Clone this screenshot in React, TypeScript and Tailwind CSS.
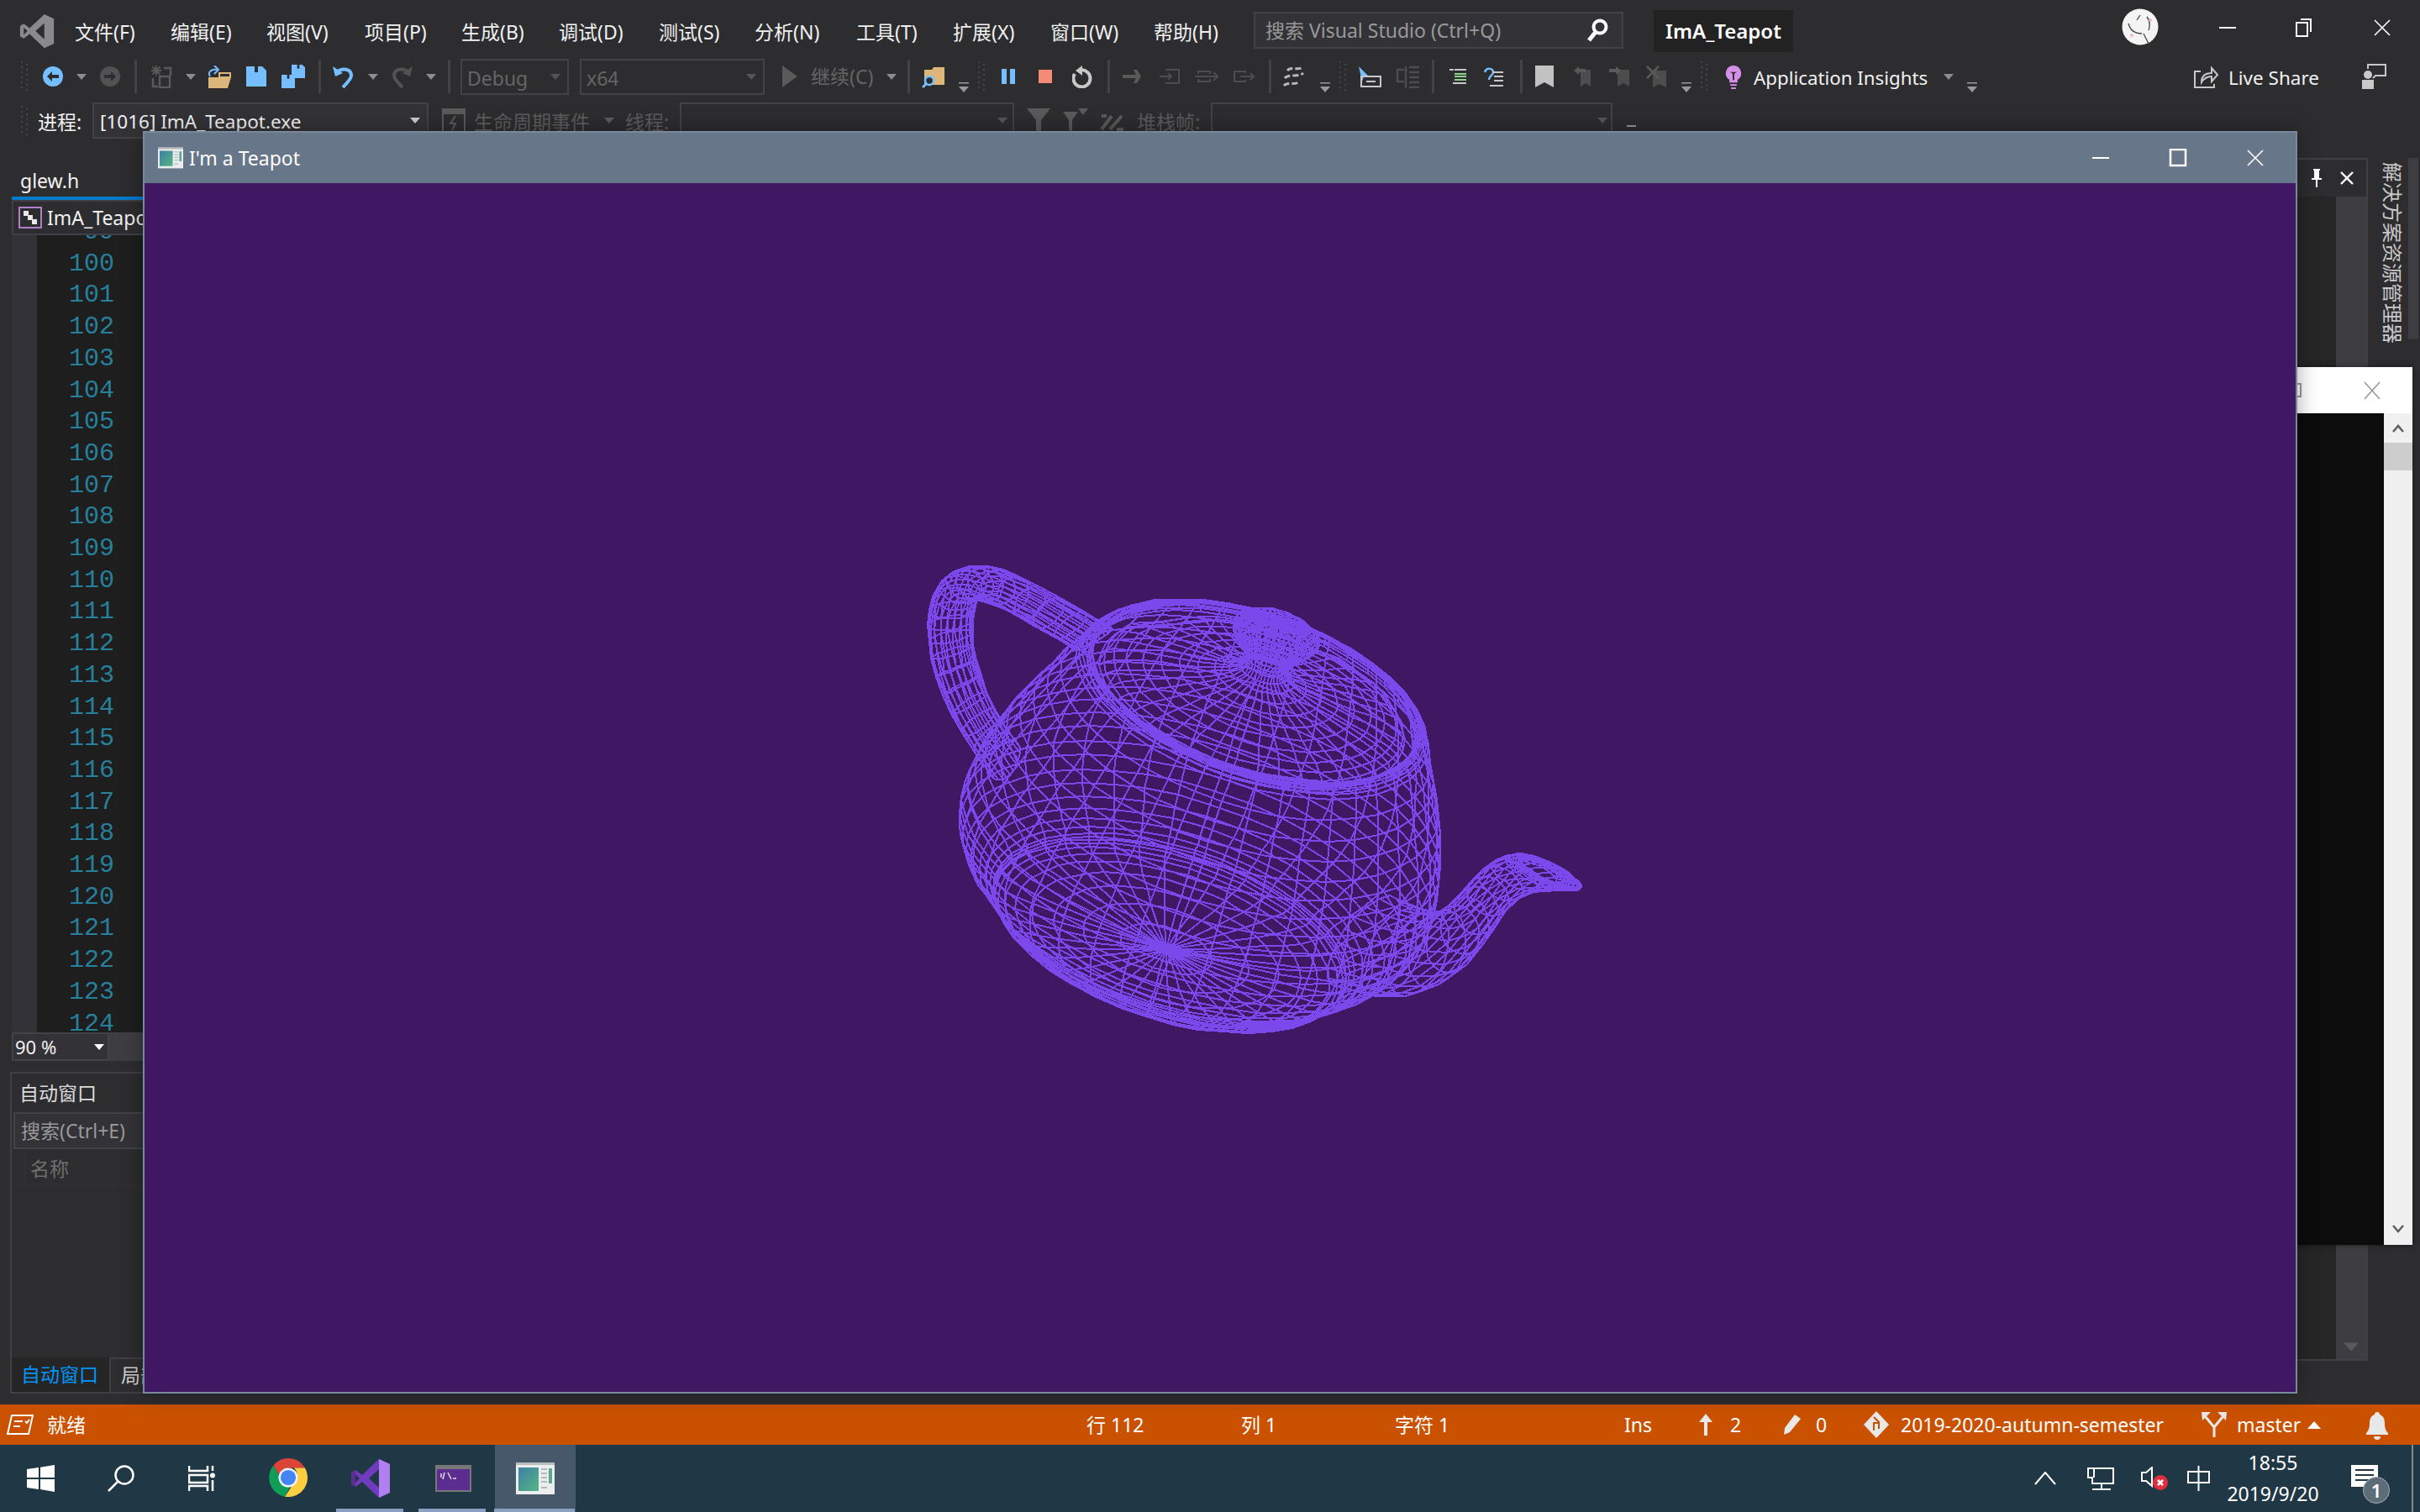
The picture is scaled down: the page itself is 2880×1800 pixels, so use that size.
import { useMemo } from "react"

// Newell teapot control points
const V = [1.4,0,2.4,1.4,-0.784,2.4,0.784,-1.4,2.4,0,-1.4,2.4,1.3375,0,2.53125,1.3375,-0.749,2.53125,0.749,-1.3375,2.53125,0,-1.3375,2.53125,1.4375,0,2.53125,1.4375,-0.805,2.53125,0.805,-1.4375,2.53125,0,-1.4375,2.53125,1.5,0,2.4,1.5,-0.84,2.4,0.84,-1.5,2.4,0,-1.5,2.4,-0.784,-1.4,2.4,-1.4,-0.784,2.4,-1.4,0,2.4,-0.749,-1.3375,2.53125,-1.3375,-0.749,2.53125,-1.3375,0,2.53125,-0.805,-1.4375,2.53125,-1.4375,-0.805,2.53125,-1.4375,0,2.53125,-0.84,-1.5,2.4,-1.5,-0.84,2.4,-1.5,0,2.4,-1.4,0.784,2.4,-0.784,1.4,2.4,0,1.4,2.4,-1.3375,0.749,2.53125,-0.749,1.3375,2.53125,0,1.3375,2.53125,-1.4375,0.805,2.53125,-0.805,1.4375,2.53125,0,1.4375,2.53125,-1.5,0.84,2.4,-0.84,1.5,2.4,0,1.5,2.4,0.784,1.4,2.4,1.4,0.784,2.4,0.749,1.3375,2.53125,1.3375,0.749,2.53125,0.805,1.4375,2.53125,1.4375,0.805,2.53125,0.84,1.5,2.4,1.5,0.84,2.4,1.75,0,1.875,1.75,-0.98,1.875,0.98,-1.75,1.875,0,-1.75,1.875,2,0,1.35,2,-1.12,1.35,1.12,-2,1.35,0,-2,1.35,2,0,0.9,2,-1.12,0.9,1.12,-2,0.9,0,-2,0.9,-0.98,-1.75,1.875,-1.75,-0.98,1.875,-1.75,0,1.875,-1.12,-2,1.35,-2,-1.12,1.35,-2,0,1.35,-1.12,-2,0.9,-2,-1.12,0.9,-2,0,0.9,-1.75,0.98,1.875,-0.98,1.75,1.875,0,1.75,1.875,-2,1.12,1.35,-1.12,2,1.35,0,2,1.35,-2,1.12,0.9,-1.12,2,0.9,0,2,0.9,0.98,1.75,1.875,1.75,0.98,1.875,1.12,2,1.35,2,1.12,1.35,1.12,2,0.9,2,1.12,0.9,2,0,0.45,2,-1.12,0.45,1.12,-2,0.45,0,-2,0.45,1.5,0,0.225,1.5,-0.84,0.225,0.84,-1.5,0.225,0,-1.5,0.225,1.5,0,0.15,1.5,-0.84,0.15,0.84,-1.5,0.15,0,-1.5,0.15,-1.12,-2,0.45,-2,-1.12,0.45,-2,0,0.45,-0.84,-1.5,0.225,-1.5,-0.84,0.225,-1.5,0,0.225,-0.84,-1.5,0.15,-1.5,-0.84,0.15,-1.5,0,0.15,-2,1.12,0.45,-1.12,2,0.45,0,2,0.45,-1.5,0.84,0.225,-0.84,1.5,0.225,0,1.5,0.225,-1.5,0.84,0.15,-0.84,1.5,0.15,0,1.5,0.15,1.12,2,0.45,2,1.12,0.45,0.84,1.5,0.225,1.5,0.84,0.225,0.84,1.5,0.15,1.5,0.84,0.15,-1.6,0,2.025,-1.6,-0.3,2.025,-1.5,-0.3,2.25,-1.5,0,2.25,-2.3,0,2.025,-2.3,-0.3,2.025,-2.5,-0.3,2.25,-2.5,0,2.25,-2.7,0,2.025,-2.7,-0.3,2.025,-3,-0.3,2.25,-3,0,2.25,-2.7,0,1.8,-2.7,-0.3,1.8,-3,-0.3,1.8,-3,0,1.8,-1.5,0.3,2.25,-1.6,0.3,2.025,-2.5,0.3,2.25,-2.3,0.3,2.025,-3,0.3,2.25,-2.7,0.3,2.025,-3,0.3,1.8,-2.7,0.3,1.8,-2.7,0,1.575,-2.7,-0.3,1.575,-3,-0.3,1.35,-3,0,1.35,-2.5,0,1.125,-2.5,-0.3,1.125,-2.65,-0.3,0.9375,-2.65,0,0.9375,-2,-0.3,0.9,-1.9,-0.3,0.6,-1.9,0,0.6,-3,0.3,1.35,-2.7,0.3,1.575,-2.65,0.3,0.9375,-2.5,0.3,1.125,-1.9,0.3,0.6,-2,0.3,0.9,1.7,0,1.425,1.7,-0.66,1.425,1.7,-0.66,0.6,1.7,0,0.6,2.6,0,1.425,2.6,-0.66,1.425,3.1,-0.66,0.825,3.1,0,0.825,2.3,0,2.1,2.3,-0.25,2.1,2.4,-0.25,2.025,2.4,0,2.025,2.7,0,2.4,2.7,-0.25,2.4,3.3,-0.25,2.4,3.3,0,2.4,1.7,0.66,0.6,1.7,0.66,1.425,3.1,0.66,0.825,2.6,0.66,1.425,2.4,0.25,2.025,2.3,0.25,2.1,3.3,0.25,2.4,2.7,0.25,2.4,2.8,0,2.475,2.8,-0.25,2.475,3.525,-0.25,2.49375,3.525,0,2.49375,2.9,0,2.475,2.9,-0.15,2.475,3.45,-0.15,2.5125,3.45,0,2.5125,2.8,0,2.4,2.8,-0.15,2.4,3.2,-0.15,2.4,3.2,0,2.4,3.525,0.25,2.49375,2.8,0.25,2.475,3.45,0.15,2.5125,2.9,0.15,2.475,3.2,0.15,2.4,2.8,0.15,2.4,0,0,3.15,0,-0.002,3.15,0.002,0,3.15,0.8,0,3.15,0.8,-0.45,3.15,0.45,-0.8,3.15,0,-0.8,3.15,0,0,2.85,0.2,0,2.7,0.2,-0.112,2.7,0.112,-0.2,2.7,0,-0.2,2.7,-0.002,0,3.15,-0.45,-0.8,3.15,-0.8,-0.45,3.15,-0.8,0,3.15,-0.112,-0.2,2.7,-0.2,-0.112,2.7,-0.2,0,2.7,0,0.002,3.15,-0.8,0.45,3.15,-0.45,0.8,3.15,0,0.8,3.15,-0.2,0.112,2.7,-0.112,0.2,2.7,0,0.2,2.7,0.45,0.8,3.15,0.8,0.45,3.15,0.112,0.2,2.7,0.2,0.112,2.7,0.4,0,2.55,0.4,-0.224,2.55,0.224,-0.4,2.55,0,-0.4,2.55,1.3,0,2.55,1.3,-0.728,2.55,0.728,-1.3,2.55,0,-1.3,2.55,1.3,0,2.4,1.3,-0.728,2.4,0.728,-1.3,2.4,0,-1.3,2.4,-0.224,-0.4,2.55,-0.4,-0.224,2.55,-0.4,0,2.55,-0.728,-1.3,2.55,-1.3,-0.728,2.55,-1.3,0,2.55,-0.728,-1.3,2.4,-1.3,-0.728,2.4,-1.3,0,2.4,-0.4,0.224,2.55,-0.224,0.4,2.55,0,0.4,2.55,-1.3,0.728,2.55,-0.728,1.3,2.55,0,1.3,2.55,-0.728,1.3,2.4,-1.3,0.728,2.4,0,1.3,2.4,0.224,0.4,2.55,0.4,0.224,2.55,0.728,1.3,2.55,1.3,0.728,2.55,0.728,1.3,2.4,1.3,0.728,2.4,0,0,0,1.5,0,0.15,1.5,0.84,0.15,0.84,1.5,0.15,0,1.5,0.15,1.5,0,0.075,1.5,0.84,0.075,0.84,1.5,0.075,0,1.5,0.075,1.425,0,0,1.425,0.798,0,0.798,1.425,0,0,1.425,0,-0.84,1.5,0.15,-1.5,0.84,0.15,-1.5,0,0.15,-0.84,1.5,0.075,-1.5,0.84,0.075,-1.5,0,0.075,-0.798,1.425,0,-1.425,0.798,0,-1.425,0,0,-1.5,-0.84,0.15,-0.84,-1.5,0.15,0,-1.5,0.15,-1.5,-0.84,0.075,-0.84,-1.5,0.075,0,-1.5,0.075,-1.425,-0.798,0,-0.798,-1.425,0,0,-1.425,0,0.84,-1.5,0.15,1.5,-0.84,0.15,0.84,-1.5,0.075,1.5,-0.84,0.075,0.798,-1.425,0,1.425,-0.798,0]

const PATCHES = [
  [1,2,3,4,5,6,7,8,9,10,11,12,13,14,15,16],[4,17,18,19,8,20,21,22,12,23,24,25,16,26,27,28],
  [19,29,30,31,22,32,33,34,25,35,36,37,28,38,39,40],[31,41,42,1,34,43,44,5,37,45,46,9,40,47,48,13],
  [13,14,15,16,49,50,51,52,53,54,55,56,57,58,59,60],[16,26,27,28,52,61,62,63,56,64,65,66,60,67,68,69],
  [28,38,39,40,63,70,71,72,66,73,74,75,69,76,77,78],[40,47,48,13,72,79,80,49,75,81,82,53,78,83,84,57],
  [57,58,59,60,85,86,87,88,89,90,91,92,93,94,95,96],[60,67,68,69,88,97,98,99,92,100,101,102,96,103,104,105],
  [69,76,77,78,99,106,107,108,102,109,110,111,105,112,113,114],[78,83,84,57,108,115,116,85,111,117,118,89,114,119,120,93],
  [121,122,123,124,125,126,127,128,129,130,131,132,133,134,135,136],[124,137,138,121,128,139,140,125,132,141,142,129,136,143,144,133],
  [133,134,135,136,145,146,147,148,149,150,151,152,69,153,154,155],[136,143,144,133,148,156,157,145,152,158,159,149,155,160,161,69],
  [162,163,164,165,166,167,168,169,170,171,172,173,174,175,176,177],[165,178,179,162,169,180,181,166,173,182,183,170,177,184,185,174],
  [174,175,176,177,186,187,188,189,190,191,192,193,194,195,196,197],[177,184,185,174,189,198,199,186,193,200,201,190,197,202,203,194],
  [204,204,204,204,207,208,209,210,211,211,211,211,212,213,214,215],[204,204,204,204,210,217,218,219,211,211,211,211,215,220,221,222],
  [204,204,204,204,219,224,225,226,211,211,211,211,222,227,228,229],[204,204,204,204,226,230,231,207,211,211,211,211,229,232,233,212],
  [212,213,214,215,234,235,236,237,238,239,240,241,242,243,244,245],[215,220,221,222,237,246,247,248,241,249,250,251,245,252,253,254],
  [222,227,228,229,248,255,256,257,251,258,259,260,254,261,262,263],[229,232,233,212,257,264,265,234,260,266,267,238,263,268,269,242],
  [270,270,270,270,279,280,281,282,275,276,277,278,271,272,273,274],[270,270,270,270,282,289,290,291,278,286,287,288,274,283,284,285],
  [270,270,270,270,291,298,299,300,288,295,296,297,285,292,293,294],[270,270,270,270,300,305,306,279,297,303,304,275,294,301,302,271],
]

const bern = (t: number) => [(1 - t) ** 3, 3 * t * (1 - t) ** 2, 3 * t * t * (1 - t), t ** 3]

function teapotPath(n: number) {
  // pivot sits near the window centre, slight size falloff towards the spout
  const project = (x: number, y: number, z: number) => {
    const dz = z - 1.5
    const f = 1 - 0.004 * x
    const px = 1280 + f * (x * 114 + y * 80 + dz * 43)
    const py = 728 + f * (x * 68 - y * 36 - dz * 122.7)
    // the window was drawn at half resolution, so snap to even pixels
    return `${Math.round(px / 2) * 2} ${Math.round(py / 2) * 2}`
  }
  const out: string[] = []
  for (const patch of PATCHES) {
    const grid: string[][] = []
    for (let i = 0; i <= n; i++) {
      const row: string[] = []
      const bu = bern(i / n)
      for (let j = 0; j <= n; j++) {
        const bv = bern(j / n)
        let x = 0, y = 0, z = 0
        for (let a = 0; a < 4; a++) {
          for (let b = 0; b < 4; b++) {
            const k = (patch[a * 4 + b] - 1) * 3
            const w = bu[a] * bv[b]
            x += V[k] * w
            y += V[k + 1] * w
            z += V[k + 2] * w
          }
        }
        row.push(project(x, y, z))
      }
      grid.push(row)
    }
    for (let i = 0; i <= n; i++) {
      for (let j = 0; j <= n; j++) {
        if (j < n) out.push(`M${grid[i][j]}L${grid[i][j + 1]}`)
        if (i < n) out.push(`M${grid[i][j]}L${grid[i + 1][j]}`)
      }
    }
  }
  return out.join("")
}

function Teapot() {
  const d = useMemo(() => teapotPath(10), [])
  return (
    <svg width="2560" height="1439" className="block">
      <path d={d} fill="none" stroke="#7a48eb" strokeWidth="2" shapeRendering="crispEdges" />
    </svg>
  )
}

function Grip() {
  const dots = []
  for (let y = 0; y < 6; y++) {
    dots.push(<rect key={`a${y}`} x="1" y={1 + y * 6} width="2" height="2" fill="#46464a" />)
    dots.push(<rect key={`b${y}`} x="7" y={4 + y * 6} width="2" height="2" fill="#46464a" />)
  }
  return <svg width="10" height="38" className="shrink-0">{dots}</svg>
}

const Sep = ({ ml }: { ml: string }) => <div className={`${ml} w-[3px] h-[40px] bg-[#434346] shrink-0`} />

const Caret = ({ className = "", color = "#8c8c8c" }: { className?: string; color?: string }) => (
  <svg width="12" height="7" className={`shrink-0 ${className}`}><path d="M0 0h12L6 7z" fill={color} /></svg>
)

const Overflow = ({ className = "" }: { className?: string }) => (
  <svg width="12" height="12" className={`shrink-0 mt-[26px] ${className}`}>
    <rect x="0" y="0" width="12" height="1.500" fill="#999" /><path d="M0 5h12L6 12z" fill="#999" />
  </svg>
)

const Disc = ({ fill, dir }: { fill: string; dir: "l" | "r" }) => (
  <svg width="24" height="24" viewBox="0 0 24 24" className="block shrink-0">
    <circle cx="12" cy="12" r="12" fill={fill} />
    <path d={dir === "l" ? "M5 12l6-6v4h8v4h-8v4z" : "M19 12l-6-6v4H5v4h8v4z"} fill="#2d2d30" />
  </svg>
)

const Floppy = ({ size = 24 }: { size?: number }) => (
  <svg width={size} height={size} viewBox="0 0 24 24" className="block">
    <path d="M0 0h19l5 5v19H0z" fill="#75beff" /><rect x="10" y="0" width="4" height="7" fill="#2d2d30" />
  </svg>
)

const Bookmark = ({ fill }: { fill: string }) => (
  <svg width="22" height="26" viewBox="0 0 22 26" className="block shrink-0"><path d="M0 0h22v26L11 20 0 26z" fill={fill} /></svg>
)

function AppIcon({ w, h }: { w: number; h: number }) {
  return (
    <svg width={w} height={h} viewBox="0 0 46 38" className="block shrink-0">
      <defs>
        <linearGradient id="tg" x1="0" y1="0" x2="1" y2="1"><stop offset="0" stopColor="#3f7fa6" /><stop offset="1" stopColor="#55b583" /></linearGradient>
      </defs>
      <rect width="46" height="38" fill="#eceeee" />
      <rect width="46" height="3" fill="#b8bcbc" />
      <rect x="3" y="6" width="24" height="28" fill="url(#tg)" />
      <path d="M30 8h7M30 13h7M30 18h7M30 23h7M30 30h7" stroke="#b5b9b9" strokeWidth="2" />
      <rect x="39" y="7" width="4" height="18" fill="#5aa68f" />
    </svg>
  )
}

const VsPath = "M34 1L47 7V41L34 47 14 28 6 34 1 31V17L6 14 14 20ZM34 13L22 24 34 35ZM6 19V29L11 24Z"

function WinControls({ restore }: { restore: boolean }) {
  return (
    <>
      <svg width="20" height="2" className="shrink-0"><rect width="20" height="2" fill="#fff" /></svg>
      <svg width="22" height="22" className="ml-[71px] shrink-0">
        {restore ? (
          <path d="M6 1h12v15M1 5h13v16H1z" fill="none" stroke="#fff" strokeWidth="2" />
        ) : (
          <rect x="2" y="1" width="18" height="19" fill="none" stroke="#fff" strokeWidth="2.5" />
        )}
      </svg>
      <svg width="20" height="20" className="ml-[71px] shrink-0"><path d="M1 1l18 18M19 1L1 19" stroke="#fff" strokeWidth="1.6" /></svg>
    </>
  )
}

const MENUS = [
  ["文件(F)", "w-[114px]"], ["编辑(E)", "w-[114px]"], ["视图(V)", "w-[117px]"], ["项目(P)", "w-[115px]"],
  ["生成(B)", "w-[116px]"], ["调试(D)", "w-[119px]"], ["测试(S)", "w-[114px]"], ["分析(N)", "w-[121px]"],
  ["工具(T)", "w-[115px]"], ["扩展(X)", "w-[116px]"], ["窗口(W)", "w-[123px]"], ["帮助(H)", "w-[119px]"],
]

const LINES = Array.from({ length: 26 }, (_, i) => 99 + i)

function TitleRow() {
  return (
    <div className="h-[70px] flex items-start shrink-0">
      <svg width="42" height="44" viewBox="0 0 48 48" className="ml-[23px] mt-[15px] shrink-0"><path d={VsPath} fill="#8a8a8c" fillRule="evenodd" /></svg>
      <div className="ml-[24px] flex h-[76px] items-center">
        {MENUS.map(([m, w]) => <span key={m} className={`${w} text-[23px] text-[#f1f1f1] whitespace-nowrap`}>{m}</span>)}
      </div>
      <div className="mt-[14px] w-[440px] h-[44px] border-2 border-[#434346] bg-[#333337] flex items-center pl-[12px] pr-[16px] justify-between shrink-0">
        <span className="text-[23px] text-[#999999] whitespace-nowrap">搜索 Visual Studio (Ctrl+Q)</span>
        <svg width="26" height="28" viewBox="0 0 26 28"><circle cx="16" cy="10" r="7.5" fill="none" stroke="#fff" strokeWidth="4" /><path d="M11 16L3 26" stroke="#fff" strokeWidth="5" /></svg>
      </div>
      <div className="ml-[36px] mt-[12px] w-[166px] h-[50px] bg-[#222223] flex items-center justify-center text-[24px] font-semibold text-white shrink-0">ImA_Teapot</div>
      <svg width="44" height="44" viewBox="0 0 44 44" className="ml-[391px] mt-[10px] shrink-0">
        <circle cx="22" cy="22" r="21.5" fill="#f4f4f4" />
        <path d="M8 18c2 8 8 12 16 12M22 8l-4 6M30 10c3 4 4 10 2 16M26 30l6 12" fill="none" stroke="#444" strokeWidth="1.3" />
        <circle cx="34" cy="14" r="2" fill="#f0b8c8" /><circle cx="12" cy="32" r="2" fill="#f0b8c8" />
      </svg>
      <div className="ml-[72px] mt-[22px] flex items-center shrink-0"><WinControls restore /></div>
    </div>
  )
}

function MainToolbar() {
  return (
    <div className="h-[42px] flex items-center pl-[24px] shrink-0">
      <Grip />
      <span className="ml-[17px]"><Disc fill="#75beff" dir="l" /></span>
      <Caret className="ml-[16px]" />
      <span className="ml-[16px]"><Disc fill="#525252" dir="r" /></span>
      <Sep ml="ml-[17px]" />
      <svg width="26" height="27" viewBox="0 0 26 27" className="ml-[16px] shrink-0" fill="none" stroke="#5a5a5a" strokeWidth="2.4">
        <path d="M7 0v12M1 6h12M2.500 1.500l9 9M11.500 1.500l-9 9" strokeWidth="1.800" /><path d="M16 3h8v9M3 15v10h6M11 13h12v13H11z" />
      </svg>
      <Caret className="ml-[16px]" />
      <svg width="28" height="27" viewBox="0 0 28 27" className="ml-[14px] shrink-0">
        <path d="M14 9h13v5H14z" fill="none" stroke="#dcb67a" strokeWidth="2" /><path d="M1 14h27l-4 13H1z" fill="#dcb67a" />
        <path d="M3 13c-3-5 1-9 8-8M8 0l5 5-5 5" fill="none" stroke="#75beff" strokeWidth="2" />
      </svg>
      <span className="ml-[18px]"><Floppy /></span>
      <div className="ml-[18px] w-[28px] h-[28px] relative shrink-0">
        <span className="absolute right-0 top-0"><Floppy size={16} /></span>
        <span className="absolute left-0 bottom-0"><Floppy size={16} /></span>
      </div>
      <Sep ml="ml-[16px]" />
      <svg width="25" height="27" viewBox="0 0 25 27" className="ml-[14px] shrink-0" fill="none" stroke="#75beff" strokeWidth="4">
        <path d="M4 8c8-6 18-4 18 4 0 4-6 10-10 14" /><path d="M0 1l3 12 9-4z" fill="#75beff" stroke="none" />
      </svg>
      <Caret className="ml-[17px]" />
      <svg width="25" height="27" viewBox="0 0 25 27" className="ml-[16px] shrink-0" fill="none" stroke="#525252" strokeWidth="4">
        <path d="M21 8c-8-6-18-4-18 4 0 4 6 10 10 14" /><path d="M25 1l-3 12-9-4z" fill="#525252" stroke="none" />
      </svg>
      <Caret className="ml-[16px]" />
      <Sep ml="ml-[14px]" />
      <div className="ml-[12px] w-[129px] h-[43px] border-2 border-[#434346] flex items-center justify-between pl-[6px] pr-[8px] shrink-0">
        <span className="pt-[4px] text-[23px] text-[#656565]">Debug</span><Caret color="#555" />
      </div>
      <div className="ml-[13px] w-[220px] h-[43px] border-2 border-[#434346] flex items-center justify-between pl-[6px] pr-[8px] shrink-0">
        <span className="pt-[4px] text-[23px] text-[#656565]">x64</span><Caret color="#555" />
      </div>
      <svg width="18" height="26" className="ml-[21px] shrink-0"><path d="M0 0l18 13L0 26z" fill="#5a5a5a" /></svg>
      <span className="ml-[16px] w-[76px] text-[23px] text-[#656565] whitespace-nowrap">继续(C)</span>
      <Caret className="ml-[14px]" />
      <Sep ml="ml-[13px]" />
      <svg width="28" height="27" viewBox="0 0 28 27" className="ml-[14px] shrink-0">
        <path d="M3 5h9l2-3h13v21H3z" fill="#dcb67a" /><circle cx="9" cy="18" r="5" fill="#2d2d30" stroke="#75beff" strokeWidth="2.500" /><path d="M5 22l-4 4" stroke="#75beff" strokeWidth="3" />
      </svg>
      <Overflow className="ml-[16px]" />
      <span className="ml-[10px]"><Grip /></span>
      <svg width="16" height="18" className="ml-[19px] shrink-0"><rect width="6" height="18" fill="#75beff" /><rect x="10" width="6" height="18" fill="#75beff" /></svg>
      <div className="ml-[28px] w-[16px] h-[16px] bg-[#f38b76] shrink-0" />
      <svg width="24" height="27" viewBox="0 0 24 27" className="ml-[24px] shrink-0" fill="none" stroke="#c8c8c8" strokeWidth="4">
        <path d="M8 6a10 10 0 1 1-5 4" /><path d="M12 0v12L4 6z" fill="#c8c8c8" stroke="none" />
      </svg>
      <Sep ml="ml-[18px]" />
      <svg width="22" height="16" className="ml-[15px] shrink-0"><path d="M13 0h4l5 8-5 8h-4l3-6H0V6h16z" fill="#5a5a5a" /></svg>
      <svg width="24" height="18" className="ml-[22px] shrink-0" fill="none" stroke="#4d4d4d" strokeWidth="2"><path d="M7 1h16v16H7M0 9h14M10 5l4 4-4 4" /></svg>
      <svg width="28" height="14" className="ml-[18px] shrink-0" fill="none" stroke="#4d4d4d" strokeWidth="2"><path d="M4 4V1h14v3M4 10v3h14v-3M0 7h26M22 2l5 5-5 5" /></svg>
      <svg width="26" height="14" className="ml-[18px] shrink-0" fill="none" stroke="#4d4d4d" strokeWidth="2"><path d="M14 3V1H1v12h13v-2M8 7h16M20 3l4 4-4 4" /></svg>
      <Sep ml="ml-[16px]" />
      <svg width="30" height="28" viewBox="0 0 30 28" className="ml-[12px] shrink-0" fill="none" stroke="#b8b8b8" strokeWidth="3" strokeDasharray="7 3">
        <path d="M7 7c4-5 14 0 18-4M4 16c4-5 17-1 22-6M3 25c4-5 14 0 18-5" />
      </svg>
      <Overflow className="ml-[16px]" />
      <span className="ml-[10px]"><Grip /></span>
      <svg width="28" height="25" viewBox="0 0 28 25" className="ml-[14px] shrink-0">
        <path d="M0 0l11 11-5 1-2 6z" fill="#75beff" /><path d="M3 12h23v12H3zM9 18h11" fill="none" stroke="#c8c8c8" strokeWidth="2" />
      </svg>
      <svg width="28" height="27" className="ml-[16px] shrink-0" fill="none" stroke="#4d4d4d" strokeWidth="2.400"><path d="M10 5H2v14h8M12 1v26M16 2h12M16 8h12M16 14h12M16 20h12M16 26h12" /></svg>
      <Sep ml="ml-[15px]" />
      <svg width="20" height="18" className="ml-[18px] shrink-0" fill="none" strokeWidth="2"><path d="M0 1h5M6 1h14M4 17h16" stroke="#c8c8c8" /><path d="M6 6h14M6 9h14M6 13h14" stroke="#8fd18f" /></svg>
      <svg width="24" height="23" viewBox="0 0 24 23" className="ml-[20px] shrink-0" fill="none" strokeWidth="2"><path d="M2 6c2-6 10-5 10 0 0 4-5 4-5 9" stroke="#75beff" strokeWidth="2.500" /><path d="M11 6h13M13 11h11M13 16h11M8 22h16" stroke="#c8c8c8" /></svg>
      <Sep ml="ml-[20px]" />
      <span className="ml-[15px]"><Bookmark fill="#c2c2c2" /></span>
      <svg width="20" height="24" className="ml-[24px] shrink-0"><path d="M8 4h12v20l-6-4-6 4z" fill="#4d4d4d" /><path d="M0 5l6-5v3h8v4H6v3z" fill="#5a5a5a" /></svg>
      <svg width="24" height="24" className="ml-[22px] shrink-0"><path d="M10 4h14v20l-7-4-7 4z" fill="#4d4d4d" /><path d="M14 5L8 0v3H0v4h8v3z" fill="#5a5a5a" /></svg>
      <svg width="24" height="26" className="ml-[20px] shrink-0"><path d="M8 6h16v20l-8-4-8 4z" fill="#4d4d4d" /><path d="M1 1l14 14M15 1L1 15" stroke="#5a5a5a" strokeWidth="2.500" /></svg>
      <Overflow className="ml-[18px]" />
      <span className="ml-[10px]"><Grip /></span>
      <svg width="20" height="29" viewBox="0 0 20 30" className="ml-[20px] shrink-0">
        <path d="M10 1a9.500 9.500 0 0 1 5 17.500V22H5v-3.500A9.500 9.500 0 0 1 10 1z" fill="#d590e8" /><path d="M6 9h8l-3 2v8H9v-8z" fill="#2d2d30" /><rect x="6" y="24" width="8" height="2" fill="#d590e8" /><rect x="7" y="28" width="6" height="2" fill="#d590e8" />
      </svg>
      <span className="ml-[14px] pt-[4px] text-[22.300px] text-[#f1f1f1] whitespace-nowrap w-[210px]">Application Insights</span>
      <Caret className="ml-[16px]" />
      <Overflow className="ml-[16px]" />
      <svg width="30" height="28" viewBox="0 0 30 28" className="ml-[258px] shrink-0" fill="none" stroke="#c8c8c8" strokeWidth="2">
        <path d="M8 8H1v19h23v-4" /><path d="M9 21c0-8 5-11 12-11V4l7 8-7 8v-6c-5 0-9 2-12 7z" />
      </svg>
      <span className="ml-[11px] pt-[4px] text-[22.500px] text-[#f1f1f1] whitespace-nowrap w-[108px]">Live Share</span>
      <svg width="30" height="30" viewBox="0 0 30 30" className="ml-[50px] shrink-0">
        <circle cx="8" cy="13" r="5" fill="#c8c8c8" /><path d="M1 19h14v11H1z" fill="#c8c8c8" /><path d="M8 6V1h21v13H17l-3 3" fill="none" stroke="#c8c8c8" strokeWidth="2" />
      </svg>
    </div>
  )
}

function DebugToolbar() {
  return (
    <div className="mt-[10px] h-[43px] flex items-center pl-[24px] shrink-0">
      <Grip />
      <span className="ml-[11px] pt-[3px] text-[23px] text-[#f1f1f1] whitespace-nowrap w-[65px]">进程:</span>
      <div className="w-[400px] h-[43px] border-2 border-[#434346] bg-[#333337] flex items-center justify-between pl-[7px] pr-[8px] shrink-0">
        <span className="pt-[3px] text-[22.500px] text-[#f1f1f1] whitespace-nowrap">[1016] ImA_Teapot.exe</span><Caret color="#ccc" />
      </div>
      <svg width="28" height="30" className="ml-[16px] shrink-0" fill="none" stroke="#5a5a5a" strokeWidth="2"><rect x="1" y="1" width="26" height="28" /><rect x="1" y="1" width="26" height="5" fill="#5a5a5a" /><path d="M16 9l-6 9h6l-4 8" /></svg>
      <span className="ml-[10px] pt-[3px] w-[143px] text-[23px] text-[#5c5c5c] whitespace-nowrap">生命周期事件</span>
      <Caret className="ml-[12px]" color="#5c5c5c" />
      <span className="ml-[13px] pt-[3px] w-[65px] text-[23px] text-[#5c5c5c] whitespace-nowrap">线程:</span>
      <div className="w-[398px] h-[43px] border-2 border-[#434346] flex items-center justify-end pr-[6px] shrink-0"><Caret color="#555" /></div>
      <svg width="28" height="30" className="ml-[15px] shrink-0"><path d="M0 0h28L17 14v16l-6-4V14z" fill="#5a5a5a" /></svg>
      <svg width="30" height="30" className="ml-[15px] shrink-0"><path d="M0 4h18l-7 10v14l-4-3V14z" fill="#5a5a5a" /><path d="M18 0h12l-6 8z" fill="#5a5a5a" /></svg>
      <svg width="30" height="24" className="ml-[14px] shrink-0" fill="none" stroke="#5a5a5a" strokeWidth="4"><path d="M2 22L14 6M12 22L26 6M2 6h6M20 22h8" /></svg>
      <span className="ml-[14px] pt-[3px] w-[88px] text-[23px] text-[#5c5c5c] whitespace-nowrap">堆栈帧:</span>
      <div className="w-[478px] h-[43px] border-2 border-[#434346] flex items-center justify-end pr-[4px] shrink-0"><Caret color="#555" /></div>
      <div className="ml-[17px] w-[11px] h-[2px] bg-[#999] self-end mb-[14px]" />
    </div>
  )
}

function LeftColumn() {
  return (
    <div className="w-[320px] shrink-0 pl-[12px] flex flex-col">
      <div className="h-[64px] pl-[12px] flex items-end pb-[2px] mt-[5px] text-[23px] text-[#f1f1f1] shrink-0">glew.h</div>
      <div className="h-[4px] bg-[#007acc] ml-[2px] shrink-0" />
      <div className="h-[42px] ml-[2px] border-2 border-[#3f3f46] flex items-center pl-[6px] overflow-hidden shrink-0">
        <svg width="28" height="26" className="shrink-0"><rect x="1" y="1" width="26" height="24" fill="#2d2d30" stroke="#b180c8" strokeWidth="2" /><path d="M6 5h6v5h5v5h5v6h-6v-5h-5v-5H6z" fill="#e8e8e8" /></svg>
        <span className="ml-[6px] text-[23px] text-[#f1f1f1] whitespace-nowrap">ImA_Teapot</span>
      </div>
      <div className="h-[949px] ml-[2px] flex overflow-hidden shrink-0">
        <div className="w-[30px] bg-[#333337] shrink-0" />
        <div className="flex-1 bg-[#1e1e1e] pl-[38px] pt-[3px]">
          <div className="-mt-[25px] font-['Liberation_Mono',monospace] text-[30px] leading-[37.7px] text-[#27809c]">
            {LINES.map(n => <div key={n} className="w-[54px] text-right">{n}</div>)}
          </div>
        </div>
      </div>
      <div className="h-[34px] ml-[2px] bg-[#3e3e42] flex shrink-0">
        <div className="w-[116px] bg-[#333337] border-2 border-[#434346] flex items-center justify-between pl-[2px] pr-[4px] text-[22px] text-[#f1f1f1]">90 %<Caret color="#fff" /></div>
      </div>
      <div className="mt-[13px] h-[383px] border-2 border-[#3f3f46] flex flex-col shrink-0">
        <div className="h-[46px] pl-[9px] flex items-center text-[23px] text-[#dcdcdc] shrink-0">自动窗口</div>
        <div className="h-[44px] mx-[2px] border-2 border-[#434346] bg-[#333337] pl-[7px] flex items-center text-[23px] text-[#999999] shrink-0">搜索(Ctrl+E)</div>
        <div className="mt-[5px] h-[37px] flex border-b border-[#333337] shrink-0">
          <div className="w-[16px] border-r border-[#333337]" />
          <span className="pl-[6px] text-[23px] leading-[37px] text-[#6f6f6f]">名称</span>
        </div>
        <div className="flex-1" />
        <div className="h-[41px] flex shrink-0">
          <div className="w-[116px] pl-[11px] bg-[#252526] text-[23px] text-[#0097fb] flex items-center">自动窗口</div>
          <div className="pl-[12px] border-2 border-b-0 border-[#3f3f46] text-[23px] text-[#d0d0d0] flex items-center flex-1 whitespace-nowrap">局部变量</div>
        </div>
      </div>
    </div>
  )
}

function RightColumn() {
  return (
    <div className="w-[146px] shrink-0 flex pb-[52px] pt-[23px]">
      <div className="w-[84px] flex flex-col border-r-2 border-b-2 border-t-2 border-[#3f3f46] shrink-0">
        <div className="h-[44px] flex items-center pl-[17px] shrink-0">
          <svg width="12" height="22"><path d="M2 0h8v2H9v9h3v2H7v9H5v-9H0v-2h3V2H2z" fill="#fff" /></svg>
          <svg width="16" height="16" className="ml-[22px]"><path d="M1 1l14 14M15 1L1 15" stroke="#fff" strokeWidth="2.400" /></svg>
        </div>
        <div className="flex-1 flex">
          <div className="w-[46px] bg-[#262627]" />
          <div className="flex-1 bg-[#3e3e42] flex flex-col justify-end items-center pb-[11px]"><Caret color="#5a5a5e" className="scale-150" /></div>
        </div>
      </div>
      <div className="ml-[14px] mt-[5px] h-[216px] w-[30px] flex items-center justify-center shrink-0 [writing-mode:vertical-rl] [text-orientation:sideways] text-[24px] text-[#c8c8c8] whitespace-nowrap">解决方案资源管理器</div>
      <div className="ml-[4px] w-[12px] h-[216px] bg-[#3e3e42] shrink-0" />
    </div>
  )
}

function ConsoleWindow() {
  return (
    <div className="absolute left-[2600px] top-[437px] w-[271px] h-[1045px] flex flex-col shadow-[0_0_6px_rgba(0,0,0,0.5)]">
      <div className="h-[55px] bg-white flex items-center justify-end pr-[38px] shrink-0">
        <div className="w-[20px] h-[17px] border-2 border-[#999]" />
        <svg width="20" height="22" className="ml-[74px]"><path d="M1 1l18 20M19 1L1 21" stroke="#999" strokeWidth="1.600" /></svg>
      </div>
      <div className="flex-1 flex">
        <div className="flex-1 bg-[#0c0c0c]" />
        <div className="w-[34px] bg-[#f0f0f0] flex flex-col items-center">
          <svg width="14" height="10" className="mt-[13px]"><path d="M1 9l6-7 6 7" fill="none" stroke="#606060" strokeWidth="2.500" /></svg>
          <div className="mt-[12px] w-full h-[33px] bg-[#cdcdcd]" />
          <div className="flex-1" />
          <svg width="14" height="10" className="mb-[14px]"><path d="M1 1l6 7 6-7" fill="none" stroke="#606060" strokeWidth="2.500" /></svg>
        </div>
      </div>
    </div>
  )
}

function TeapotWindow() {
  return (
    <div className="absolute left-[170px] top-[156px] w-[2564px] h-[1503px] border-2 border-[#7a889c] bg-[#3f1763] flex flex-col shadow-[0_0_24px_rgba(0,0,0,0.35)]">
      <div className="h-[60px] bg-[#68768a] flex items-center pl-[16px] pr-[38px] shrink-0">
        <AppIcon w={30} h={26} />
        <span className="ml-[7px] text-[23px] text-white whitespace-nowrap">I'm a Teapot</span>
        <div className="ml-auto flex items-center"><WinControls restore={false} /></div>
      </div>
      <Teapot />
    </div>
  )
}

function StatusBar() {
  return (
    <div className="h-[48px] bg-[#ca5100] flex items-center text-[23px] text-white whitespace-nowrap shrink-0">
      <svg width="32" height="24" viewBox="0 0 32 24" className="ml-[8px] shrink-0" fill="none" stroke="#fff" strokeWidth="2"><path d="M6 1h25l-5 22H1zM9 8h10M8 14h8M22 8l2 2 3-4" /></svg>
      <span className="ml-[16px] w-[1237px]">就绪</span>
      <span className="w-[184px]">行 112</span>
      <span className="w-[183px]">列 1</span>
      <span className="w-[273px]">字符 1</span>
      <span className="w-[85px]">Ins</span>
      <svg width="18" height="26" className="ml-[3px] shrink-0"><path d="M9 0l8 10h-6v16H7V10H1z" fill="#e8e8e8" /></svg>
      <span className="ml-[20px] w-[63px]">2</span>
      <svg width="22" height="26" className="shrink-0"><path d="M14 1l7 5-13 16-7 3 1-8z" fill="#e8e8e8" /></svg>
      <span className="ml-[17px] w-[57px]">0</span>
      <svg width="30" height="32" viewBox="0 0 30 32" className="shrink-0"><path d="M15 0l15 16-15 16L0 16z" fill="#e8e8e8" /><path d="M12 7l6 6v8M18 14l-6 0v9" stroke="#ca5100" strokeWidth="2" fill="none" /></svg>
      <span className="ml-[14px] w-[358px]">2019-2020-autumn-semester</span>
      <svg width="30" height="30" viewBox="0 0 30 30" className="shrink-0" fill="none" stroke="#e8e8e8" strokeWidth="3"><path d="M15 30V18L5 6M15 18L25 6" /><path d="M0 0h11L1 10zM30 0H19l10 10z" fill="#e8e8e8" stroke="none" /></svg>
      <span className="ml-[12px] w-[84px]">master</span>
      <svg width="16" height="9" className="shrink-0"><path d="M0 9h16L8 0z" fill="#fff" /></svg>
      <svg width="26" height="34" viewBox="0 0 26 34" className="ml-[54px] mt-[4px] shrink-0"><path d="M13 0c2 0 3 1 3 3 5 2 6 6 6 11 0 6 2 9 4 11v2H0v-2c2-2 4-5 4-11 0-5 1-9 6-11 0-2 1-3 3-3z" fill="#e8e8e8" /><path d="M9 29h8a4 4 0 0 1-8 0z" fill="#e8e8e8" /></svg>
    </div>
  )
}

function Chrome() {
  return (
    <svg width="46" height="46" viewBox="0 0 48 48" className="block shrink-0">
      <path d="M24 0a24 24 0 0 1 20.800 12H24a12 12 0 0 0-11.500 8.500L5.500 9A24 24 0 0 1 24 0z" fill="#db4437" />
      <path d="M5.500 9l10.500 18a12 12 0 0 0 10 8.800L20 47.700A24 24 0 0 1 5.500 9z" fill="#0f9d58" />
      <path d="M44.800 12A24 24 0 0 1 20 47.700l11.500-18a12 12 0 0 0-.500-17.700z" fill="#ffcd40" />
      <circle cx="24" cy="24" r="12" fill="#f1f1f1" /><circle cx="24" cy="24" r="9.500" fill="#4285f4" />
    </svg>
  )
}

function Taskbar() {
  return (
    <div className="h-[80px] bg-[#203845] flex items-center relative shrink-0">
      <svg width="33" height="32" viewBox="0 0 33 32" className="ml-[32px] shrink-0"><path d="M0 5l14-2v12H0zM16 2.700L33 0v15H16zM0 17h14v12L0 27zM16 17h17v15l-17-3z" fill="#fff" /></svg>
      <svg width="33" height="32" viewBox="0 0 33 32" className="ml-[63px] shrink-0" fill="none" stroke="#fff" strokeWidth="2.500"><circle cx="20" cy="12" r="10.500" /><path d="M12 20L1 31" /></svg>
      <svg width="32" height="30" viewBox="0 0 32 30" className="ml-[63px] shrink-0" fill="none" stroke="#fff" strokeWidth="2.500"><path d="M1 0v6h22V0M1 30v-6h22v6M1 11h22v9H1zM29 0v6M29 17v13" /><circle cx="29" cy="11.500" r="3" fill="#fff" stroke="none" /></svg>
      <span className="ml-[64px] -mt-[2px]"><Chrome /></span>
      <svg width="48" height="48" viewBox="0 0 48 48" className="ml-[51px] shrink-0">
        <path d={VsPath} fill="#6f3cc0" fillRule="evenodd" /><path d="M34 1L47 7V41L34 47Z" fill="#b180f0" /><path d="M1 17L6 14V34L1 31Z" fill="#5c2d91" />
      </svg>
      <svg width="43" height="32" viewBox="0 0 43 32" className="ml-[53px] shrink-0"><rect width="43" height="32" fill="#777" /><rect x="2" y="5" width="39" height="25" fill="#5c2d91" /><path d="M7 10v5M11 9l-2 8M15 9l4 8M21 16h4" stroke="#ddd" strokeWidth="1.500" /></svg>
      <div className="ml-[28px] w-[96px] h-[80px] bg-[#465869] flex items-center justify-center shrink-0"><AppIcon w={46} h={38} /></div>
      <div className="absolute left-[400px] bottom-0 w-[80px] h-[4px] bg-[#8aa0c0]" />
      <div className="absolute left-[498px] bottom-0 w-[80px] h-[4px] bg-[#8aa0c0]" />
      <div className="absolute left-[588px] bottom-0 w-[96px] h-[4px] bg-[#8aa0c0]" />
      <svg width="26" height="16" className="ml-auto shrink-0"><path d="M1 15L13 1l12 14" fill="none" stroke="#fff" strokeWidth="2" /></svg>
      <svg width="32" height="27" viewBox="0 0 32 27" className="ml-[37px] shrink-0" fill="none" stroke="#fff" strokeWidth="2"><path d="M8 1h23v18H6V12H1V1h7v11M17 19v7M6 26h22" /></svg>
      <svg width="33" height="28" viewBox="0 0 33 28" className="ml-[31px] shrink-0"><path d="M7 7L14 1v22l-7-6H2V7z" fill="none" stroke="#fff" strokeWidth="2" /><circle cx="24" cy="19" r="9" fill="#e02f3e" /><path d="M21 16l6 6M27 16l-6 6" stroke="#fff" strokeWidth="2.500" /></svg>
      <svg width="27" height="30" viewBox="0 0 27 30" className="ml-[23px] shrink-0" fill="none" stroke="#fff" strokeWidth="2"><path d="M1 7h25v13H1zM13.500 0v30" /></svg>
      <div className="ml-[20px] w-[110px] flex flex-col items-center text-[23px] leading-[37px] text-white whitespace-nowrap shrink-0"><span>18:55</span><span>2019/9/20</span></div>
      <div className="ml-[38px] -mt-[6px] w-[32px] h-[26px] bg-white flex flex-col gap-[4px] pt-[5px] px-[5px] shrink-0">
        <div className="h-[2px] bg-[#203845]" /><div className="h-[2px] bg-[#203845]" /><div className="h-[2px] bg-[#203845]" />
      </div>
      <div className="absolute left-[2812px] top-[38px] w-[32px] h-[32px] rounded-full bg-[#5d6d78] border border-[#aab] flex items-center justify-center text-[22px] font-semibold text-white">1</div>
      <div className="w-[2px] h-[80px] bg-[#7f8b93] ml-[40px] shrink-0" />
      <div className="w-[8px] shrink-0" />
    </div>
  )
}

export default function App() {
  return (
    <div className="relative w-[2880px] h-[1800px] overflow-hidden bg-[#2d2d30] flex flex-col font-['Noto_Sans','Noto_Sans_CJK_SC',sans-serif]">
      <TitleRow />
      <MainToolbar />
      <DebugToolbar />
      <div className="flex-1 flex justify-between min-h-0">
        <LeftColumn />
        <RightColumn />
      </div>
      <StatusBar />
      <Taskbar />
      <ConsoleWindow />
      <TeapotWindow />
    </div>
  )
}
